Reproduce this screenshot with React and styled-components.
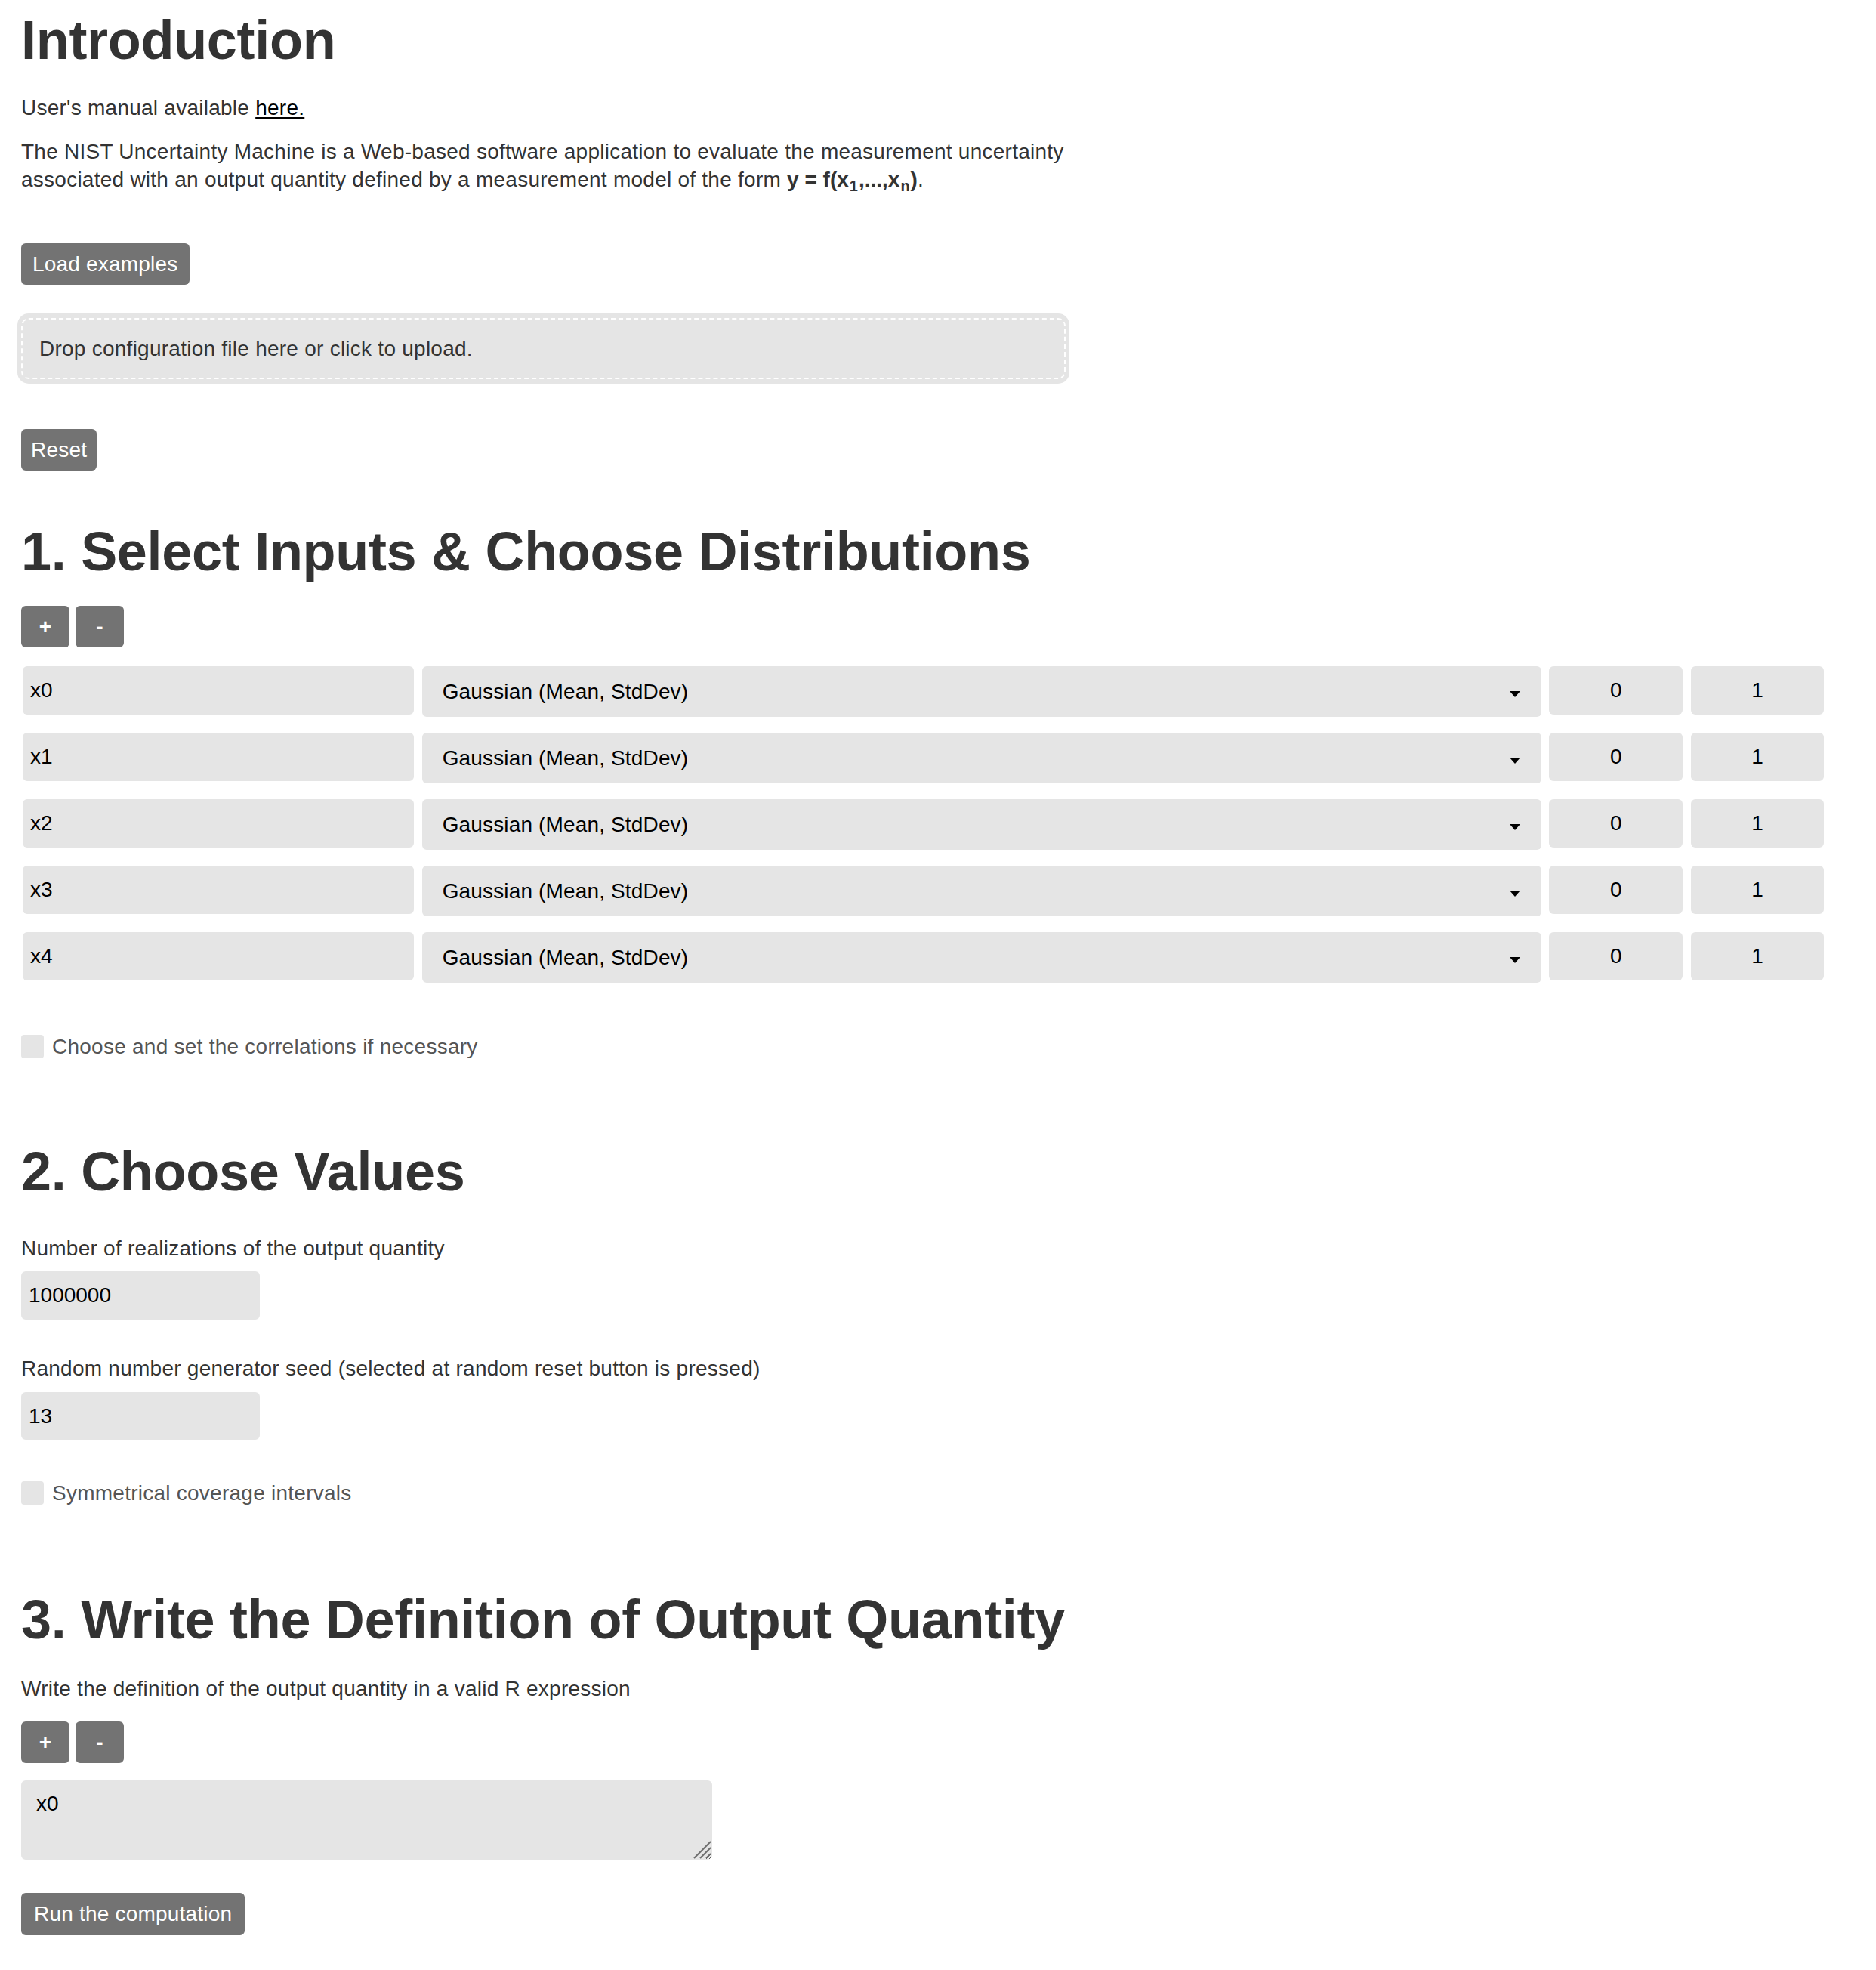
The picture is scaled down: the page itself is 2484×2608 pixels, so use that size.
import React from 'react';
import styled, { createGlobalStyle } from 'styled-components';

const GlobalStyle = createGlobalStyle`
  html, body {
    margin: 0;
    padding: 0;
    background: #fff;
  }
  body {
    font-family: "Liberation Sans", Arial, Helvetica, sans-serif;
    font-size: 28px;
    line-height: 37px;
    color: #333;
  }
`;

const Page = styled.div`
  display: flex;
  flex-direction: column;
  align-items: flex-start;
  padding: 13px 0 47px 28px;
`;

const IntroColumn = styled.div`
  width: 1388px;
  display: flex;
  flex-direction: column;
  align-items: flex-start;
`;

const Title = styled.h1`
  margin: ${(p) => p.$top || 0}px 0 0;
  font-size: 72px;
  line-height: 80px;
  font-weight: 700;
  letter-spacing: -0.3px;
  color: #333;
`;

const Para = styled.p`
  margin: ${(p) => p.$top || 0}px 0 0;
  font-size: 28px;
  line-height: 37px;
  letter-spacing: 0.25px;
`;

const Link = styled.a`
  color: #000;
  text-decoration: underline;
  text-underline-offset: 3px;
`;

const Formula = styled.strong`
  font-weight: 700;
  color: #333;
  letter-spacing: 0;
`;

const Sub = styled.sub`
  font-size: 20px;
  line-height: 0;
  vertical-align: -6px;
  margin: 0 1px;
`;

const Button = styled.button`
  margin-top: ${(p) => p.$top || 0}px;
  height: ${(p) => p.$h || 55}px;
  padding: 0 ${(p) => p.$px || 15}px;
  border: none;
  border-radius: 6px;
  background: #737373;
  color: #fff;
  font-family: inherit;
  font-size: 28px;
  line-height: 1;
  letter-spacing: 0.2px;
  cursor: pointer;
`;

const Dropzone = styled.div`
  margin: ${(p) => p.$top || 0}px 0 0 -5px;
  width: calc(100% + 5px);
  box-sizing: border-box;
  height: 93px;
  padding: 6px 5px;
  border-radius: 15px;
  background: #e5e5e5;
`;

const DropInner = styled.div`
  box-sizing: border-box;
  height: 100%;
  display: flex;
  align-items: center;
  padding: 0 22px;
  border: 2px dashed #fff;
  border-radius: 10px;
  color: #333;
  letter-spacing: 0.25px;
`;

const ButtonGroup = styled.div`
  margin-top: ${(p) => p.$top || 0}px;
  display: flex;
  gap: 8px;
`;

const SquareButton = styled(Button)`
  width: 64px;
  padding: 0;
  font-size: 28px;
  font-weight: 700;
`;

const InputGrid = styled.div`
  margin: ${(p) => p.$top || 0}px 0 0 2px;
  width: 2385px;
  display: grid;
  grid-template-columns: 518fr 1482fr 177fr 176fr;
  column-gap: 10.6px;
  row-gap: 21px;
  align-items: start;
`;

const Field = styled.input`
  box-sizing: border-box;
  width: ${(p) => (p.$w ? `${p.$w}px` : '100%')};
  height: ${(p) => p.$h || 64}px;
  margin-top: ${(p) => p.$top || 0}px;
  padding: 0 10px;
  border: none;
  border-radius: 6px;
  background: #e5e5e5;
  color: #000;
  font-family: inherit;
  font-size: 28px;
  text-align: ${(p) => (p.$center ? 'center' : 'left')};
  outline: none;
`;

const SelectBox = styled.div`
  box-sizing: border-box;
  height: 67px;
  display: flex;
  align-items: center;
  justify-content: space-between;
  padding: 0 28px 0 27px;
  border-radius: 6px;
  background: #e5e5e5;
  color: #000;
  font-size: 28px;
  letter-spacing: 0.15px;
`;

const Caret = () => (
  <svg width="14" height="8" viewBox="0 0 14 8" style={{ marginTop: 6 }}>
    <path d="M0 0h14L7 8z" fill="#000" />
  </svg>
);

const CheckRow = styled.label`
  margin-top: ${(p) => p.$top || 0}px;
  display: flex;
  align-items: center;
  gap: 11px;
  color: #555;
  font-size: 28px;
  letter-spacing: 0.25px;
`;

const CheckBox = styled.span`
  width: 30px;
  height: 31px;
  border-radius: 4px;
  background: #e5e5e5;
`;

const Label = styled.div`
  margin-top: ${(p) => p.$top || 0}px;
  font-size: 28px;
  line-height: 37px;
  letter-spacing: 0.25px;
  color: #333;
`;

const ExpressionWrap = styled.div`
  position: relative;
  margin-top: ${(p) => p.$top || 0}px;
  display: flex;
`;

const Expression = styled.textarea`
  box-sizing: border-box;
  width: 915px;
  height: 105px;
  padding: 14px 20px;
  border: none;
  border-radius: 6px;
  background: #e5e5e5;
  color: #000;
  font-family: inherit;
  font-size: 28px;
  line-height: 34px;
  resize: both;
  outline: none;
`;

const Grip = styled.svg`
  position: absolute;
  right: 1px;
  bottom: 1px;
  pointer-events: none;
`;

const inputs = ['x0', 'x1', 'x2', 'x3', 'x4'];

export default function App() {
  return (
    <>
      <GlobalStyle />
      <Page>
        <IntroColumn>
          <Title>Introduction</Title>
          <Para $top={31}>
            User's manual available <Link href="#">here.</Link>
          </Para>
          <Para $top={21}>
            The NIST Uncertainty Machine is a Web-based software application to evaluate the measurement uncertainty
            associated with an output quantity defined by a measurement model of the form{' '}
            <Formula>
              y = f(x<Sub>1</Sub>,...,x<Sub>n</Sub>)
            </Formula>
            .
          </Para>
          <Button $top={66}>Load examples</Button>
          <Dropzone $top={38}>
            <DropInner>Drop configuration file here or click to upload.</DropInner>
          </Dropzone>
          <Button $top={60} $px={13}>Reset</Button>
        </IntroColumn>

        <Title $top={67}>1. Select Inputs &amp; Choose Distributions</Title>
        <ButtonGroup $top={32}>
          <SquareButton>+</SquareButton>
          <SquareButton>-</SquareButton>
        </ButtonGroup>
        <InputGrid $top={25}>
          {inputs.map((name) => (
            <React.Fragment key={name}>
              <Field readOnly defaultValue={name} />
              <SelectBox>
                <span>Gaussian (Mean, StdDev)</span>
                <Caret />
              </SelectBox>
              <Field readOnly defaultValue="0" $center />
              <Field readOnly defaultValue="1" $center />
            </React.Fragment>
          ))}
        </InputGrid>
        <CheckRow $top={66}>
          <CheckBox />
          Choose and set the correlations if necessary
        </CheckRow>

        <Title $top={107}>2. Choose Values</Title>
        <Label $top={43}>Number of realizations of the output quantity</Label>
        <Field readOnly defaultValue="1000000" $w={316} $top={12} />
        <Label $top={46}>Random number generator seed (selected at random reset button is pressed)</Label>
        <Field readOnly defaultValue="13" $w={316} $h={63} $top={13} />
        <CheckRow $top={52}>
          <CheckBox />
          Symmetrical coverage intervals
        </CheckRow>

        <Title $top={109}>3. Write the Definition of Output Quantity</Title>
        <Label $top={33}>Write the definition of the output quantity in a valid R expression</Label>
        <ButtonGroup $top={25}>
          <SquareButton>+</SquareButton>
          <SquareButton>-</SquareButton>
        </ButtonGroup>
        <ExpressionWrap $top={23}>
          <Expression defaultValue="x0" />
          <Grip width="26" height="26" viewBox="0 0 26 26">
            <path d="M25 3L3 25M25 11L11 25M25 19L19 25" stroke="#6e6e6e" strokeWidth="2" />
          </Grip>
        </ExpressionWrap>
        <Button $top={44} $h={56} $px={17}>Run the computation</Button>
      </Page>
    </>
  );
}
